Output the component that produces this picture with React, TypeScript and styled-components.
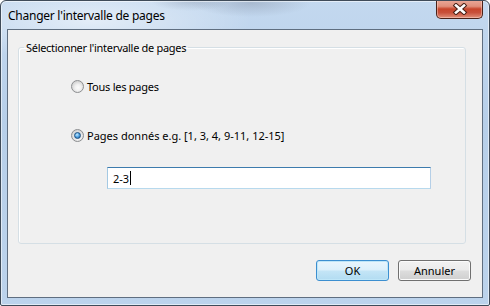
import styled, { createGlobalStyle } from 'styled-components'

// --------------------------------------------------------------------------------------------------------------
const GlobalStyle = createGlobalStyle`
  html, body {
    margin: 0;
    padding: 0;
    background: #ffffff;
  }
  body {
    font-family: "Noto Sans", "Open Sans", sans-serif;
    font-size: 11px;
    color: #000;
  }
`

const Window = styled.div`
  box-sizing: border-box;
  width: 490px;
  height: 306px;
  display: flex;
  flex-direction: column;
  border: 1px solid #3f4b59;
  border-radius: 6px 6px 2px 2px;
  box-shadow: inset 0 0 0 1px rgba(255, 255, 255, 0.55);
  background:
    radial-gradient(ellipse 60px 14px at 250px 2px, rgba(120, 130, 150, 0.35), transparent),
    radial-gradient(ellipse 40px 10px at 190px 0px, rgba(120, 130, 150, 0.3), transparent),
    radial-gradient(ellipse 160px 40px at 90px 20px, rgba(255, 255, 255, 0.55), transparent),
    linear-gradient(180deg, #c3d8ef 0%, #b7cfe9 40%, #bcd3ec 100%);
  overflow: hidden;
`

const TitleBar = styled.div`
  height: 28px;
  display: flex;
  align-items: flex-start;
  justify-content: space-between;
  padding: 0 6px 0 7px;
`

const Caption = styled.div`
  font-size: 12px;
  letter-spacing: -0.25px;
  line-height: 16px;
  padding-top: 7px;
  color: #000;
`

const CloseButton = styled.div`
  box-sizing: border-box;
  width: 47px;
  height: 19px;
  margin-top: -1px;
  display: flex;
  align-items: center;
  justify-content: center;
  border: 1px solid #4a2219;
  border-top: none;
  border-radius: 0 0 5px 5px;
  background: linear-gradient(180deg, #eaa999 0%, #e08f7b 35%, #c7452b 50%, #c8503a 70%, #e0907a 100%);
  box-shadow: inset 0 0 0 1px rgba(255, 220, 210, 0.45);
`

const Client = styled.div`
  flex: 1;
  display: flex;
  flex-direction: column;
  margin: 0 6px 7px 6px;
  border: 1px solid #5f6e80;
  background: #f0f0f0;
`

const GroupBox = styled.fieldset`
  flex: 1;
  margin: 10px 16px 0 10px;
  padding: 0;
  border: 1px solid #d5dfe5;
  border-radius: 3px;
  box-shadow: inset 1px 1px 0 #ffffff;
  min-width: 0;
`

const Legend = styled.legend`
  margin-left: 5px;
  padding: 0 2px;
  font-size: 11px;
  letter-spacing: -0.3px;
  line-height: 15px;
`

const Options = styled.div`
  display: flex;
  flex-direction: column;
  align-items: flex-start;
  padding: 24px 0 0 52px;
`

const RadioRow = styled.label<{ $spaced?: boolean; $tight?: boolean }>`
  display: flex;
  align-items: center;
  gap: 3px;
  height: 15px;
  line-height: 15px;
  letter-spacing: ${p => (p.$tight ? '-0.25px' : '0')};
  margin-top: ${p => (p.$spaced ? '34px' : '0')};
`

const Radio = styled.span<{ $checked?: boolean }>`
  box-sizing: border-box;
  width: 13px;
  height: 13px;
  border-radius: 50%;
  border: 1px solid #8c8e90;
  background: radial-gradient(circle at 55% 60%, #fbfbfb 0, #f1f1f1 3px, #d6d6d6 6px);
  display: flex;
  align-items: center;
  justify-content: center;

  &::after {
    content: '';
    box-sizing: border-box;
    width: 7px;
    height: 7px;
    border-radius: 50%;
    display: ${p => (p.$checked ? 'block' : 'none')};
    border: 1px solid #1b4f80;
    background: radial-gradient(circle at 40% 35%, #c8ecff 0, #58a8e6 45%, #1a5c9e 100%);
  }
`

const TextField = styled.div`
  box-sizing: border-box;
  width: 324px;
  height: 22px;
  margin: 24px 0 0 36px;
  padding-left: 5px;
  display: flex;
  align-items: center;
  background: #ffffff;
  border: 1px solid;
  border-color: #3d7bad #b5cfe7 #b7d9ed #a4c9e3;
  font-size: 11px;
`

const Caret = styled.span`
  width: 1px;
  height: 14px;
  margin-left: 1px;
  background: #000;
`

const ButtonRow = styled.div`
  display: flex;
  justify-content: flex-end;
  gap: 9px;
  padding: 16px 11px 16px;
`

const DialogButton = styled.div<{ $default?: boolean }>`
  box-sizing: border-box;
  width: 73px;
  height: 21px;
  display: flex;
  align-items: center;
  justify-content: center;
  font-size: 11px;
  border-radius: 3px;
  border: 1px solid ${p => (p.$default ? '#3c8fd0' : '#707070')};
  box-shadow: inset 0 0 0 1px ${p => (p.$default ? '#bfe6f8' : '#fbfbfb')};
  background: ${p =>
    p.$default
      ? 'linear-gradient(180deg, #eaf6fd 0%, #dcf0fb 48%, #c4e5f6 52%, #b2dcf2 100%)'
      : 'linear-gradient(180deg, #f2f2f2 0%, #ebebeb 48%, #dddddd 52%, #cfcfcf 100%)'};
`

// --------------------------------------------------------------------------------------------------------------

function CloseGlyph() {
  return (
    <svg width="16" height="12" viewBox="0 0 16 12">
      <path d="M4 2.5 L12 9.5 M12 2.5 L4 9.5" stroke="#4a2016" strokeWidth="4.6" strokeLinecap="square" />
      <path d="M4 2.5 L12 9.5 M12 2.5 L4 9.5" stroke="#ffffff" strokeWidth="2.6" strokeLinecap="square" />
    </svg>
  )
}

export default function App() {
  return (
    <>
      <GlobalStyle />
      <Window>
        <TitleBar>
          <Caption>Changer l'intervalle de pages</Caption>
          <CloseButton>
            <CloseGlyph />
          </CloseButton>
        </TitleBar>

        <Client>
          <GroupBox>
            <Legend>Sélectionner l'intervalle de pages</Legend>
            <Options>
              <RadioRow $tight>
                <Radio />
                Tous les pages
              </RadioRow>
              <RadioRow $spaced>
                <Radio $checked />
                Pages donnés e.g. [1, 3, 4, 9-11, 12-15]
              </RadioRow>
              <TextField>
                2-3
                <Caret />
              </TextField>
            </Options>
          </GroupBox>

          <ButtonRow>
            <DialogButton $default>OK</DialogButton>
            <DialogButton>Annuler</DialogButton>
          </ButtonRow>
        </Client>
      </Window>
    </>
  )
}
